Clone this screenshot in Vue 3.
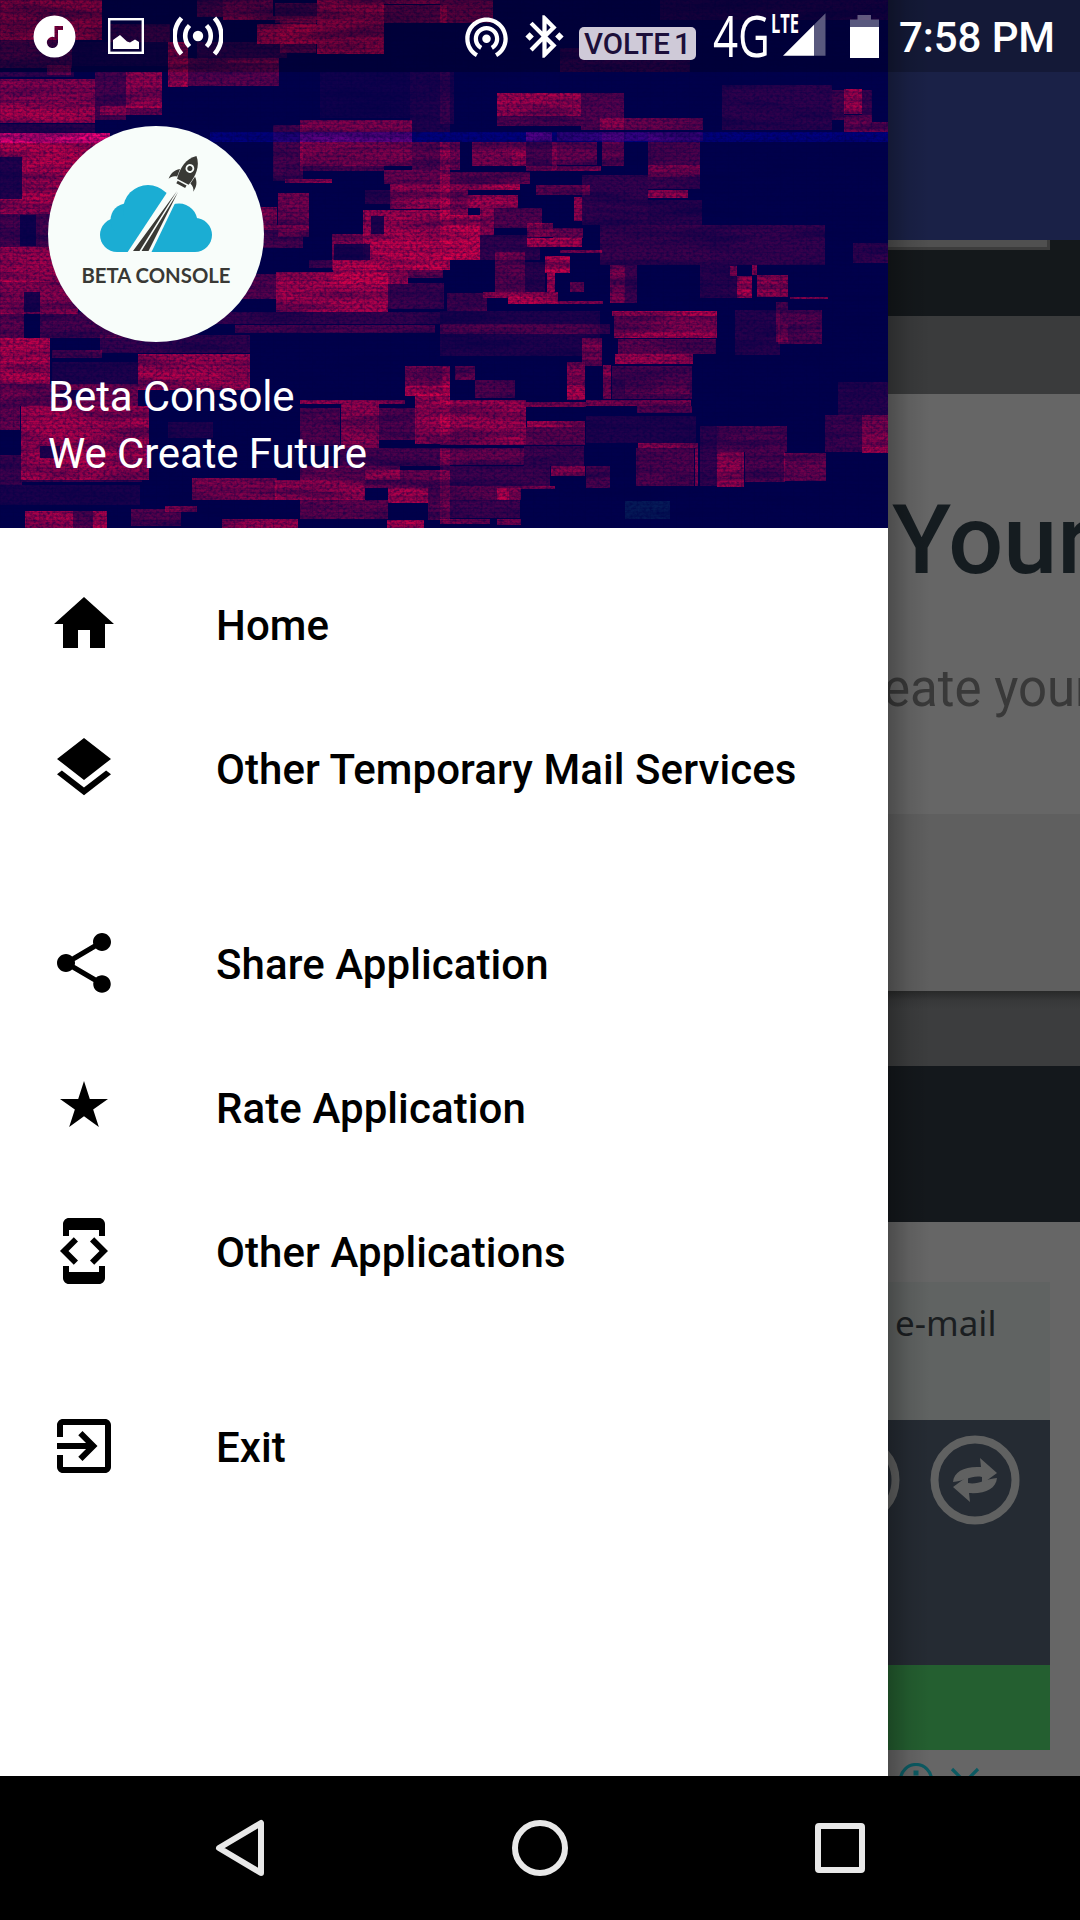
<template>
  <div class="screen">
    <div class="status">
      <div class="status__group">
        <svg class="status__music" width="43" height="43" viewBox="0 0 43 43">
          <path
            fill-rule="evenodd"
            d="M21.5.5a21 21 0 1 1 0 42 21 21 0 0 1 0-42zM21.5 11v11.3a5.6 5.6 0 1 0 3.5 5.2V15h5v-4z"
          />
        </svg>
        <svg class="status__image" width="36" height="36" viewBox="0 0 36 36">
          <rect x="1.2" y="1.2" width="33.6" height="33.6" fill="none" stroke="#fff" stroke-width="2.4" />
          <path d="M5 31V22l7-5 7 6.500 3 1 5-3 4 2.500V31z" />
        </svg>
        <svg class="status__cast" width="50" height="40" viewBox="0 0 50 40">
          <circle cx="25" cy="20" r="5.200" />
          <g fill="none" stroke="#fff" stroke-width="4.600">
            <path d="M16.500 9.500a15 15 0 0 0 0 21" />
            <path d="M33.500 9.500a15 15 0 0 1 0 21" />
            <path d="M8.500 2a27 27 0 0 0 0 36" />
            <path d="M41.500 2a27 27 0 0 1 0 36" />
          </g>
        </svg>
      </div>
      <div class="status__group">
        <svg width="51" height="51" viewBox="0 0 24 24">
          <path
            d="M12 11c-1.100 0-2 .9-2 2s.9 2 2 2 2-.9 2-2-.9-2-2-2zm6 2c0-3.310-2.690-6-6-6s-6 2.690-6 6c0 2.220 1.210 4.150 3 5.190l1-1.740c-1.190-.7-2-1.970-2-3.450 0-2.210 1.790-4 4-4s4 1.790 4 4c0 1.480-.81 2.750-2 3.450l1 1.740c1.790-1.040 3-2.970 3-5.190zM12 3C6.480 3 2 7.480 2 13c0 3.700 2.010 6.920 4.990 8.650l1-1.730C5.610 18.530 4 15.960 4 13c0-4.420 3.580-8 8-8s8 3.580 8 8c0 2.960-1.610 5.530-4 6.920l1 1.730c2.990-1.730 5-4.950 5-8.650 0-5.520-4.480-10-10-10z"
          />
        </svg>
        <svg class="status__bt" width="51" height="51" viewBox="0 0 24 24">
          <path
            d="M7 12l-2-2-2 2 2 2 2-2zm10.710-4.290L12 2h-1v7.590L6.410 5 5 6.410 10.590 12 5 17.590 6.410 19 11 14.410V22h1l5.710-5.710-4.300-4.290 4.300-4.290zM13 5.830l1.880 1.880L13 9.590V5.830zm1.880 10.460L13 18.170v-3.760l1.880 1.880zM19 10l-2 2 2 2 2-2-2-2z"
          />
        </svg>
        <span class="status__volte">
          <svg width="107" height="33" viewBox="0 0 107 33">
            <text x="0" y="27.300" textLength="86" lengthAdjust="spacingAndGlyphs">VOLTE</text>
            <text x="90" y="27.300">1</text>
          </svg>
        </span>
        <svg class="status__signal" width="112" height="48" viewBox="0 0 112 48">
          <text class="net" x="-1" y="45" textLength="57" lengthAdjust="spacingAndGlyphs">4G</text>
          <text class="lte" x="57" y="20.500" textLength="28" lengthAdjust="spacingAndGlyphs">LTE</text>
          <path d="M69 43.700L100 12.700V43.700z" />
          <path d="M100 12.700L111.500 1.200V43.700H100z" opacity="0.35" />
        </svg>
        <svg class="status__battery" width="29" height="43" viewBox="0 0 29 43">
          <path d="M0 12V4.500h7.500V0h13.500v4.500H29V12z" opacity="0.35" />
          <path d="M0 12h29v31H0z" />
        </svg>
        <span class="status__clock">7:58 PM</span>
      </div>
    </div>

    <main class="content">
      <aside class="drawer">
        <header class="drawer__header">
          <svg class="drawer__art" width="888" height="528" viewBox="0 0 888 528">
            <defs>
              <filter id="grain" x="0" y="0" width="100%" height="100%" color-interpolation-filters="sRGB">
                <feTurbulence type="fractalNoise" baseFrequency="0.3 0.4" numOctaves="2" seed="7" />
                <feColorMatrix values="0 0 0 0 0  0 0 0 0 0  0 0 0 0 0.28  2.200 0 0 0 -0.85" />
              </filter>
              <filter id="streaks" x="0" y="0" width="100%" height="100%" color-interpolation-filters="sRGB">
                <feTurbulence type="fractalNoise" baseFrequency="0.012 0.1" numOctaves="2" seed="3" />
                <feColorMatrix values="0 0 0 0 0  0 0 0 0 0  0 0 0 0 0.28  3 0 0 0 -1.300" />
              </filter>
              <pattern id="scan" width="13" height="4" patternUnits="userSpaceOnUse">
                <path d="M0 0h13M0 0v4" stroke="#00003c" stroke-width="1" opacity="0.3" />
              </pattern>
            </defs>
            <rect width="888" height="528" fill="#00004c" />
            <rect
              v-for="(b, i) in blocks"
              :key="i"
              :x="b[0]"
              :y="b[1]"
              :width="b[2]"
              :height="b[3]"
              :fill="b[4] ? '#dc0048' : '#00004c'"
              :opacity="b[4] || 0.8"
            />
            <rect x="210" y="132" width="678" height="10" fill="#0000b0" opacity="0.5" />
            <rect x="0" y="133" width="110" height="10" fill="#ff0080" opacity="0.8" />
            <rect x="300" y="132" width="112" height="10" fill="#9a0098" opacity="0.5" />
            <rect x="526" y="132" width="26" height="9" fill="#7a0090" opacity="0.5" />
            <rect x="557" y="132" width="146" height="9" fill="#6a0088" opacity="0.5" />
            <rect x="625" y="501" width="45" height="18" fill="#0c4068" opacity="0.4" />
            <rect width="888" height="528" fill="url(#scan)" />
            <rect width="888" height="528" filter="url(#streaks)" opacity="0.4" />
            <rect width="888" height="528" filter="url(#grain)" opacity="0.6" />
          </svg>
          <svg class="avatar" width="216" height="216" viewBox="0 0 216 216">
            <circle cx="108" cy="108" r="108" fill="#f8fdfa" />
            <g fill="#1badd3">
              <circle cx="69" cy="109" r="17" />
              <circle cx="79" cy="94" r="16.500" />
              <circle cx="100" cy="84" r="25" />
              <circle cx="131" cy="96" r="18.500" />
              <circle cx="147" cy="109" r="17" />
              <path d="M69 92h78v34H69z" />
            </g>
            <path d="M122 62L79 127h24l27-56V58z" fill="#f8fdfa" />
            <path d="M129 65L85 125h6.500zM130 66L93.500 125h7z" fill="#393935" />
            <g transform="translate(140 46) rotate(28)" fill="#393935">
              <path d="M0-18C8-11 9 0 6.500 11h-13C-9 0-8-11 0-18z" />
              <path d="M-8.500 1c-5 4-6 8-5.500 14 1-3 3-5 6.500-6zM8.500 1c5 4 6 8 5.500 14-1-3-3-5-6.500-6z" />
              <path d="M-5 12.500H5v3H-5z" />
              <circle cx="0" cy="-4" r="3.500" stroke="#f8fdfa" stroke-width="1.800" />
            </g>
            <text class="avatar__text" x="33.500" y="156.500" textLength="149" lengthAdjust="spacingAndGlyphs">
              BETA CONSOLE
            </text>
          </svg>
          <p class="drawer__name">Beta Console</p>
          <p class="drawer__tagline">We Create Future</p>
        </header>

        <nav class="menu">
          <ul v-for="(group, i) in menu" :key="i" class="menu__group">
            <li v-for="item in group" :key="item.title" class="menu__item">
              <svg class="menu__icon" :viewBox="item.box || '0 0 24 24'">
                <path :d="item.icon" />
              </svg>
              <span>{{ item.title }}</span>
            </li>
          </ul>
        </nav>
      </aside>

      <section class="page">
        <div class="page__bar"></div>
        <div class="page__top"><div class="page__field"></div></div>
        <div class="page__gap"></div>
        <div class="page__hero">
          <h1 class="page__title">Your</h1>
          <p class="page__text">eate your</p>
        </div>
        <div class="page__panel"></div>
        <div class="page__gap page__gap--shadow"></div>
        <div class="page__dark"></div>
        <div class="ad">
          <div class="ad__head">e-mail</div>
          <div class="ad__body">
            <svg width="162" height="245" viewBox="0 0 162 245">
              <g fill="none" stroke="#606161" stroke-width="8">
                <circle cx="-33" cy="60" r="40.500" />
                <circle cx="87" cy="60" r="40.500" />
              </g>
              <g fill="#606161">
                <path :d="arrow" />
                <path :d="arrow" transform="rotate(180 87 60)" />
              </g>
            </svg>
          </div>
          <div class="ad__green"></div>
          <div class="ad__choices">
            <svg width="100" height="36" viewBox="0 0 100 36">
              <g fill="none" stroke="#0b5a62" stroke-width="3.200">
                <circle cx="28" cy="17" r="15.500" />
                <path d="M64 6l26 26M90 6L64 32" />
              </g>
              <path d="M25.500 7.500h5v5h-5zM25.500 15h5v11h-5z" fill="#0b5a62" />
            </svg>
          </div>
        </div>
        <div class="page__shade"></div>
      </section>
    </main>

    <footer class="navbar">
      <svg width="60" height="60" viewBox="0 0 60 60">
        <path d="M51 5v50L9 30z" />
      </svg>
      <svg width="60" height="60" viewBox="0 0 60 60">
        <circle cx="30" cy="30" r="25" />
      </svg>
      <svg width="60" height="60" viewBox="0 0 60 60">
        <rect x="8" y="8" width="44" height="44" rx="1" />
      </svg>
    </footer>
  </div>
</template>

<script setup>
const arrow = "M65 62C66 51 77 46 93 47L92 38 109 53 94 64V57C84 55 77 61 65 62z";

const menu = [
  [
    { title: "Home", icon: "M10 20v-6h4v6h5v-8h3L12 3 2 12h3v8z" },
    {
      title: "Other Temporary Mail Services",
      icon: "M11.990 18.540l-7.370-5.730L3 14.070l9 7 9-7-1.630-1.270-7.380 5.740zM12 16l7.360-5.730L21 9l-9-7-9 7 1.630 1.270L12 16z",
    },
  ],
  [
    {
      title: "Share Application",
      icon: "M18 16.080c-.76 0-1.440.3-1.960.77L8.910 12.700c.05-.23.09-.46.09-.7s-.04-.47-.09-.7l7.050-4.110c.54.5 1.250.81 2.040.81 1.660 0 3-1.340 3-3s-1.340-3-3-3-3 1.340-3 3c0 .24.04.47.09.7L8.040 9.810C7.500 9.310 6.790 9 6 9c-1.660 0-3 1.340-3 3s1.340 3 3 3c.79 0 1.500-.31 2.040-.81l7.120 4.160c-.05.21-.08.43-.08.65 0 1.610 1.310 2.920 2.920 2.920 1.610 0 2.920-1.310 2.920-2.920s-1.310-2.920-2.920-2.920z",
    },
    {
      title: "Rate Application",
      box: "0 0 18 18",
      icon: "M9 11.300l3.710 2.700-1.420-4.360L15 7h-4.550L9 2.500 7.550 7H3l3.710 2.640L5.290 14z",
    },
    {
      title: "Other Applications",
      icon: "M7 5h10v2h2V3c0-1.100-.9-1.990-2-1.990L7 1c-1.100 0-2 .9-2 2v4h2V5zm8.410 11.590L20 12l-4.590-4.590L14 8.830 17.170 12 14 15.170l1.410 1.420zM10 15.170L6.830 12 10 8.830 8.590 7.410 4 12l4.590 4.590L10 15.170zM17 19H7v-2H5v4c0 1.100.9 2 2 2h10c1.100 0 2-.9 2-2v-4h-2v2z",
    },
  ],
  [
    {
      title: "Exit",
      icon: "M10.090 15.590L11.500 17l5-5-5-5-1.410 1.410L12.670 11H3v2h9.670l-2.580 2.590zM19 3H5c-1.110 0-2 .9-2 2v4h2V5h14v14H5v-4H3v4c0 1.100.89 2 2 2h14c1.100 0 2-.9 2-2V5c0-1.100-.9-2-2-2z",
    },
  ],
];

// glitch blocks: x, y, width, height, strength (0 cuts back to the base colour)
const blocks = [
  [0, 0, 102, 40, 0.75], [0, 40, 72, 28, 0.35], [47, 65, 24, 10, 0.5], [72, 42, 96, 24, 0.08],
  [110, 24, 60, 18, 0.3], [197, 0, 26, 17, 0.35], [223, 0, 50, 16, 0.5], [223, 16, 100, 4, 0.6],
  [275, 3, 42, 20, 0.35], [317, 0, 67, 54, 0.75], [382, 5, 65, 18, 0.45], [384, 0, 56, 4, 0.65],
  [257, 24, 60, 20, 0.75], [280, 20, 36, 33, 0.4], [168, 42, 20, 45, 0.7], [182, 58, 97, 28, 0.45],
  [228, 60, 50, 3, 0.4], [197, 42, 90, 16, 0.2],
  [0, 72, 74, 5, 0.25], [0, 79, 95, 44, 0.65], [0, 103, 95, 18, 0.5], [95, 72, 31, 48, 0.35],
  [126, 72, 36, 36, 0.7], [100, 106, 62, 9, 0.5], [0, 124, 95, 9, 0.2], [0, 133, 110, 70, 0.85],
  [0, 157, 22, 42, 0], [0, 203, 60, 11, 0.7], [0, 214, 50, 33, 0.35], [20, 215, 16, 31, 0],
  [0, 247, 60, 35, 0.75], [300, 120, 112, 46, 0.6], [273, 125, 30, 56, 0.35], [300, 166, 84, 5, 0.35],
  [285, 179, 47, 4, 0.7], [320, 72, 90, 46, 0.08], [410, 72, 40, 60, 0.15], [412, 142, 38, 28, 0.45],
  [384, 170, 66, 14, 0.5], [278, 193, 31, 44, 0.55], [255, 207, 22, 18, 0.65], [263, 225, 46, 5, 0.8],
  [263, 230, 40, 18, 0.35], [365, 190, 25, 14, 0.25], [390, 184, 60, 25, 0.75], [363, 210, 87, 60, 0.75],
  [371, 216, 13, 20, 0], [384, 216, 45, 18, 0.2], [332, 234, 118, 36, 0.6], [334, 244, 36, 16, 0],
  [309, 260, 23, 8, 0.3], [24, 292, 16, 46, 0], [0, 280, 78, 34, 0.65], [24, 292, 16, 20, 0],
  [40, 312, 100, 26, 0.35], [0, 312, 24, 28, 0.45], [0, 338, 50, 46, 0.85], [52, 350, 50, 8, 0.4],
  [52, 362, 86, 22, 0.15], [138, 354, 112, 36, 0.75], [138, 372, 112, 6, 0.3], [242, 274, 34, 25, 0.4],
  [180, 312, 260, 12, 0.25], [276, 272, 112, 40, 0.8], [333, 260, 75, 24, 0.7], [388, 283, 56, 26, 0.3],
  [408, 260, 35, 18, 0.5], [235, 325, 200, 8, 0.35], [100, 335, 150, 18, 0.25], [0, 384, 138, 22, 0.55],
  [60, 390, 30, 10, 0], [0, 406, 20, 24, 0.5], [21, 406, 128, 74, 0.8], [40, 446, 20, 12, 0],
  [60, 446, 88, 18, 0.3], [0, 455, 22, 30, 0.3], [22, 472, 120, 10, 0.3], [0, 485, 140, 20, 0.12],
  [25, 511, 48, 17, 0.8], [73, 511, 20, 17, 0.4], [93, 511, 14, 17, 0.85], [131, 509, 50, 17, 0.4],
  [165, 506, 32, 6, 0.6], [192, 478, 85, 22, 0.6], [275, 480, 90, 20, 0.75], [300, 466, 100, 14, 0.5],
  [365, 470, 85, 18, 0.5], [388, 488, 40, 15, 0.8], [428, 488, 22, 32, 0.4], [222, 519, 76, 9, 0.7],
  [300, 500, 88, 19, 0.45], [387, 520, 37, 8, 0.85], [300, 400, 105, 4, 0.7], [300, 408, 40, 38, 0.4],
  [341, 404, 38, 44, 0.7], [379, 408, 36, 32, 0.4], [415, 392, 35, 52, 0.75], [405, 366, 45, 20, 0.55],
  [405, 386, 45, 10, 0.8], [340, 448, 110, 18, 0.35], [168, 422, 45, 16, 0.15],
  [440, 0, 53, 23, 0.5], [560, 48, 130, 24, 0.2], [660, 0, 228, 20, 0.12], [440, 72, 14, 52, 0.15],
  [497, 93, 84, 23, 0.8], [497, 116, 84, 10, 0.4], [581, 93, 43, 37, 0.4], [600, 118, 103, 12, 0.5],
  [722, 85, 110, 45, 0.22], [832, 90, 12, 30, 0.35], [844, 89, 18, 25, 0.85], [844, 115, 28, 17, 0.5],
  [862, 90, 10, 25, 0.3], [872, 122, 16, 10, 0.5], [440, 142, 20, 28, 0.55], [472, 142, 54, 24, 0.6],
  [512, 150, 14, 16, 0.4], [526, 132, 26, 36, 0.35], [552, 142, 5, 28, 0.65], [557, 142, 40, 23, 0.5],
  [526, 166, 75, 5, 0.6], [602, 132, 22, 34, 0.5], [648, 132, 52, 33, 0.35], [648, 165, 52, 12, 0.6],
  [648, 177, 52, 12, 0.3], [648, 190, 40, 8, 0.7], [440, 172, 90, 12, 0.45], [440, 184, 80, 6, 0.85],
  [536, 185, 54, 10, 0.45], [468, 195, 50, 13, 0.8], [440, 190, 28, 26, 0.6], [440, 215, 40, 45, 0.95],
  [480, 208, 14, 27, 0.7], [494, 208, 48, 20, 0.4], [480, 235, 60, 25, 0.25], [527, 223, 26, 14, 0.6],
  [553, 228, 30, 10, 0.5], [527, 238, 55, 9, 0.8], [560, 250, 42, 3, 0.6], [574, 197, 8, 24, 0.7],
  [582, 175, 66, 50, 0.25], [648, 200, 54, 25, 0.2], [600, 225, 110, 40, 0.28], [710, 225, 115, 40, 0.25],
  [853, 243, 35, 20, 0.25], [495, 252, 30, 40, 0.45], [545, 256, 25, 17, 0.9], [547, 272, 8, 20, 0.8],
  [570, 282, 14, 10, 0.5], [525, 262, 20, 30, 0.2], [483, 292, 75, 6, 0.8], [508, 296, 50, 8, 0.85],
  [558, 301, 45, 3, 0.6], [610, 265, 15, 38, 0.6], [625, 265, 12, 38, 0.3], [447, 293, 40, 18, 0.4],
  [440, 324, 170, 10, 0.3], [440, 311, 160, 45, 0.15], [730, 266, 7, 10, 0.7], [752, 265, 5, 10, 0.7],
  [737, 276, 15, 22, 0.85], [757, 275, 31, 22, 0.7], [790, 297, 38, 2, 0.6], [700, 265, 37, 33, 0.22],
  [776, 302, 12, 40, 0.4], [788, 310, 34, 14, 0.4], [778, 324, 44, 20, 0.4], [735, 310, 45, 45, 0.18],
  [612, 311, 105, 5, 0.9], [614, 316, 103, 22, 0.6], [614, 332, 103, 6, 0.5], [618, 339, 98, 15, 0.45],
  [615, 354, 78, 10, 0.75], [612, 366, 80, 33, 0.35], [625, 380, 65, 14, 0.25], [603, 365, 8, 34, 0.7],
  [582, 338, 20, 28, 0.55], [567, 362, 18, 38, 0.65], [567, 385, 18, 14, 0.6], [586, 400, 105, 6, 0.6],
  [637, 406, 55, 7, 0.4], [442, 367, 8, 28, 0.6], [455, 366, 20, 14, 0.5], [475, 380, 40, 18, 0.4],
  [440, 400, 86, 45, 0.75], [526, 402, 60, 5, 0.6], [527, 421, 58, 6, 0.8], [526, 427, 59, 18, 0.45],
  [440, 448, 84, 17, 0.5], [524, 446, 60, 20, 0.3], [440, 466, 110, 20, 0.3], [551, 466, 34, 10, 0.7],
  [440, 486, 115, 3, 0.6], [440, 489, 57, 11, 0.45], [497, 488, 12, 12, 0.9], [509, 488, 12, 12, 0.6],
  [440, 500, 80, 18, 0.3], [440, 519, 50, 5, 0.6], [497, 519, 24, 6, 0.6], [586, 416, 110, 27, 0.15],
  [586, 466, 24, 22, 0.35], [638, 443, 60, 5, 0.65], [636, 448, 58, 38, 0.4], [695, 448, 3, 38, 0.65],
  [700, 426, 17, 60, 0.25], [717, 426, 70, 26, 0.38], [717, 452, 27, 35, 0.7], [745, 452, 40, 30, 0.38],
  [784, 453, 42, 28, 0.5], [825, 415, 37, 37, 0.3], [838, 382, 50, 33, 0.18], [862, 415, 26, 38, 0.65],
  [862, 447, 26, 6, 0.6],
];
</script>

<style>
body {
  margin: 0;
  background: #000;
}
</style>

<style scoped>
.screen {
  position: relative;
  width: 1080px;
  height: 1920px;
  overflow: hidden;
  font-family: Roboto, sans-serif;
}
svg {
  display: block;
  flex: none;
}

/* status bar */
.status {
  position: absolute;
  top: 0;
  left: 0;
  z-index: 2;
  display: flex;
  justify-content: space-between;
  box-sizing: border-box;
  width: 1080px;
  height: 72px;
  padding: 0 25px 0 32.5px;
  background: rgba(0, 0, 0, 0.22);
  color: #fff;
  fill: #fff;
}
.status__group {
  display: flex;
  align-items: center;
}
.status__image {
  margin-left: 32.5px;
}
.status__cast {
  margin-left: 29px;
}
.status__bt {
  margin-left: 7px;
}
.status__volte {
  margin: 15px 0 0 9px;
  padding: 0 5px;
  border-radius: 5px;
  background: #cfcad8;
  fill: #1c0f3a;
  font-size: 30px;
  font-weight: 500;
}
.status__volte svg,
.status__signal {
  overflow: visible;
}
.status__signal {
  margin-left: 18px;
}
.net {
  font-family: "Open Sans", sans-serif;
  font-size: 56px;
}
.lte {
  font-family: "Open Sans", sans-serif;
  font-size: 26px;
  font-weight: 700;
}
.status__battery {
  margin: 0 20px 0 24px;
}
.status__clock {
  font-size: 42px;
  font-weight: 500;
  line-height: 72px;
  letter-spacing: -0.1px;
  padding-top: 3px;
}

.content {
  display: flex;
  height: 1776px;
}

/* drawer */
.drawer {
  width: 888px;
  background: #fff;
}
.drawer__header {
  position: relative;
  box-sizing: border-box;
  height: 528px;
  padding: 126px 48px 0;
  color: #fff;
}
.drawer__art {
  position: absolute;
  top: 0;
  left: 0;
}
.avatar {
  position: relative;
}
.avatar__text {
  fill: #393935;
  font-family: Lato, sans-serif;
  font-size: 20.5px;
  font-weight: 700;
}
.drawer__name,
.drawer__tagline {
  position: relative;
  margin: 0;
  font-size: 42px;
  line-height: 57px;
  letter-spacing: -0.13px;
}
.drawer__name {
  margin-top: 26px;
}
.menu {
  padding-top: 24px;
}
.menu__group {
  margin: 0 0 51px;
  padding: 0;
  list-style: none;
}
.menu__item {
  display: flex;
  align-items: center;
  height: 144px;
  padding-left: 48px;
  font-size: 42px;
  font-weight: 500;
  letter-spacing: 0.08px;
  color: #000;
}
.menu__item span {
  padding-top: 3px;
}
.menu__icon {
  width: 72px;
  height: 72px;
  margin-right: 96px;
}

/* dimmed page behind the drawer */
.page {
  position: relative;
  width: 192px;
  overflow: hidden;
  background: #666;
}
.page__bar {
  height: 240px;
  background: #1a2147;
}
.page__top {
  height: 76px;
  background: #14181b;
}
.page__field {
  width: 159px;
  height: 7px;
  border: solid #3c3c3c;
  border-width: 0 3px 3px 0;
  background: #505050;
}
.page__gap {
  height: 78px;
  background: #3a3b3c;
}
.page__hero {
  height: 420px;
}
.page__title {
  margin: 0;
  padding: 91px 0 0 4px;
  font-size: 97px;
  font-weight: 500;
  line-height: 110px;
  color: #151c20;
}
.page__text {
  margin: 0 0 0 -5px;
  padding-top: 64px;
  font-size: 51px;
  line-height: 60px;
  color: #393939;
  white-space: nowrap;
}
.page__panel {
  height: 177px;
  background: #5f5f5f;
}
.page__gap--shadow {
  height: 75px;
  background: linear-gradient(#282929, #38393a 10px, #3c3d3e 18px);
}
.page__dark {
  height: 156px;
  background: #14181c;
}
.ad {
  width: 162px;
  padding-top: 60px;
}
.ad__head {
  box-sizing: border-box;
  height: 138px;
  padding: 16px 0 0 7px;
  background: #606362;
  color: #1b1e21;
  font-family: "Noto Sans", sans-serif;
  font-size: 35px;
  line-height: 50px;
}
.ad__body {
  height: 245px;
  background: #252b33;
}
.ad__green {
  height: 85px;
  background: #245f30;
}
.ad__choices {
  padding-top: 13px;
}
.page__shade {
  position: absolute;
  top: 0;
  left: 0;
  width: 42px;
  height: 100%;
  background: linear-gradient(90deg, rgba(0, 0, 0, 0.26), rgba(0, 0, 0, 0.08) 50%, transparent);
}

/* system buttons */
.navbar {
  display: flex;
  align-items: center;
  justify-content: center;
  gap: 240px;
  height: 144px;
  background: #000;
}
.navbar svg {
  fill: none;
  stroke: #e8e8e8;
  stroke-width: 6;
  stroke-linejoin: round;
}
</style>
